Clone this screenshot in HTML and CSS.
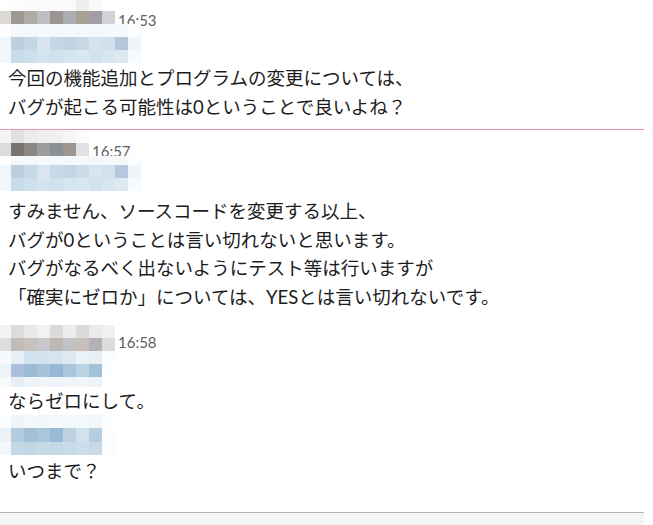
FILE: index.html
```html
<!DOCTYPE html>
<html lang="ja">
<head>
<meta charset="utf-8">
<title>chat</title>
<link rel="stylesheet" href="styles.css">
</head>
<body>
<div class="chat">
  <div class="msg m1">
    <div class="head">
      <div class="mosaic c9 r-name1">
        <i style="background:#fff"></i><i style="background:#fdfdfd"></i><i style="background:#fbfbfb"></i><i style="background:#fbfbfb"></i><i style="background:#fafafa"></i><i style="background:#fafafa"></i><i style="background:#eeeeee"></i><i style="background:#fafafa"></i><i style="background:#fff"></i>
        <i style="background:#dcd8d4"></i><i style="background:#9c9896"></i><i style="background:#b0aca4"></i><i style="background:#bebdc2"></i><i style="background:#9a9590"></i><i style="background:#aaaeb2"></i><i style="background:#a89f95"></i><i style="background:#a29ca6"></i><i style="background:#d2d2d4"></i>
      </div>
      <span class="time t1">16:53</span>
    </div>
    <div class="mosaic c11 r-blue1">
      <i style="background:#fbfdfe"></i><i style="background:#f5f9fb"></i><i style="background:#f4f8fb"></i><i style="background:#f6f9fb"></i><i style="background:#f5f8fb"></i><i style="background:#f5f9fb"></i><i style="background:#f6f9fb"></i><i style="background:#f4f8fb"></i><i style="background:#f5f9fb"></i><i style="background:#f6f9fc"></i><i style="background:#fbfdfe"></i>
      <i style="background:#f2f6fa"></i><i style="background:#bcd0e0"></i><i style="background:#c4d8e4"></i><i style="background:#d8e4ee"></i><i style="background:#c4d8e6"></i><i style="background:#c0d4e2"></i><i style="background:#c8d8e6"></i><i style="background:#d4e4ee"></i><i style="background:#d0e0ec"></i><i style="background:#b4c8dc"></i><i style="background:#eef4f8"></i>
      <i style="background:#f3f7fa"></i><i style="background:#c8dcea"></i><i style="background:#cce0ec"></i><i style="background:#d4e4ee"></i><i style="background:#d0e2ed"></i><i style="background:#d6e6f0"></i><i style="background:#d8e7f1"></i><i style="background:#d2e2ed"></i><i style="background:#d6e5f0"></i><i style="background:#dce8f2"></i><i style="background:#f6fafc"></i>
    </div>
    <p class="text t-m1">今回の機能追加とプログラムの変更については、<br>バグが起こる可能性は0ということで良いよね？</p>
  </div>
  <div class="divider"></div>
  <div class="msg m2">
    <div class="head">
      <div class="mosaic c7 r-name">
        <i style="background:#f4f4f4"></i><i style="background:#e0e0e0"></i><i style="background:#ebebeb"></i><i style="background:#eeeeee"></i><i style="background:#f0f0f0"></i><i style="background:#f6f6f6"></i><i style="background:#fcfcfc"></i>
        <i style="background:#dcdcdc"></i><i style="background:#767374"></i><i style="background:#8a8682"></i><i style="background:#9c9c9c"></i><i style="background:#8c9094"></i><i style="background:#9c9590"></i><i style="background:#e0e2e6"></i>
      </div>
      <span class="time t2">16:57</span>
    </div>
    <div class="mosaic c11 r-blue2">
      <i style="background:#fbfdfe"></i><i style="background:#f5f9fb"></i><i style="background:#f4f8fb"></i><i style="background:#f6f9fb"></i><i style="background:#f5f8fb"></i><i style="background:#f5f9fb"></i><i style="background:#f6f9fb"></i><i style="background:#f4f8fb"></i><i style="background:#f5f9fb"></i><i style="background:#f6f9fc"></i><i style="background:#fbfdfe"></i>
      <i style="background:#f2f6fa"></i><i style="background:#bccfdf"></i><i style="background:#c6dae5"></i><i style="background:#dae6ef"></i><i style="background:#c6dbe7"></i><i style="background:#c3d6e3"></i><i style="background:#cbdbe7"></i><i style="background:#d6e5ee"></i><i style="background:#d2e1ec"></i><i style="background:#b5c9de"></i><i style="background:#eef4f8"></i>
      <i style="background:#f3f7fa"></i><i style="background:#c9dcea"></i><i style="background:#cde0ec"></i><i style="background:#d4e4ee"></i><i style="background:#d0e2ed"></i><i style="background:#d6e6f0"></i><i style="background:#d8e7f1"></i><i style="background:#d2e2ed"></i><i style="background:#d6e5f0"></i><i style="background:#dde9f3"></i><i style="background:#f6fafc"></i>
    </div>
    <p class="text t-m2">すみません、ソースコードを変更する以上、<br>バグが0ということは言い切れないと思います。<br>バグがなるべく出ないようにテスト等は行いますが<br>「確実にゼロか」については、YESとは言い切れないです。</p>
  </div>
  <div class="msg m3">
    <div class="head">
      <div class="mosaic c9 r-name">
        <i style="background:#f3f3f3"></i><i style="background:#dcdcdc"></i><i style="background:#e8e8e8"></i><i style="background:#f2f2f2"></i><i style="background:#dcdad8"></i><i style="background:#ececec"></i><i style="background:#dcdad8"></i><i style="background:#eaeaea"></i><i style="background:#f0f0f0"></i>
        <i style="background:#e0dedc"></i><i style="background:#c0bcba"></i><i style="background:#c8c2be"></i><i style="background:#c6c8cc"></i><i style="background:#beb8b4"></i><i style="background:#c2c2c6"></i><i style="background:#c8c0b8"></i><i style="background:#b4b0b8"></i><i style="background:#dcdcdc"></i>
      </div>
      <span class="time t3">16:58</span>
    </div>
    <div class="mosaic c9 r-blue3">
      <i style="background:#f6fafd"></i><i style="background:#e8f0f7"></i><i style="background:#d2e2ee"></i><i style="background:#d4e4ef"></i><i style="background:#d6e4ef"></i><i style="background:#dde9f2"></i><i style="background:#eaf2f8"></i><i style="background:#e8f0f6"></i><i style="background:#fafcfe"></i>
      <i style="background:#eef3f7"></i><i style="background:#a9c1da"></i><i style="background:#9cbcd6"></i><i style="background:#a6c3da"></i><i style="background:#94b8d6"></i><i style="background:#a9c6dc"></i><i style="background:#bcd3e3"></i><i style="background:#a4c1da"></i><i style="background:#fdfeff"></i>
      <i style="background:#f7fafc"></i><i style="background:#e8eef6"></i><i style="background:#eef4f9"></i><i style="background:#f0f5fa"></i><i style="background:#eef4fa"></i><i style="background:#f0f5f9"></i><i style="background:#f2f6fa"></i><i style="background:#eff4f8"></i><i style="background:#fff"></i>
    </div>
    <p class="text t-m3">ならゼロにして。</p>
    <div class="mosaic c9 r-blue4">
      <i style="background:#fafcfd"></i><i style="background:#f0f5f9"></i><i style="background:#f4f8fb"></i><i style="background:#f3f7fa"></i><i style="background:#f4f8fb"></i><i style="background:#f5f8fb"></i><i style="background:#f4f8fb"></i><i style="background:#f3f7fa"></i><i style="background:#fdfeff"></i>
      <i style="background:#edf2f6"></i><i style="background:#b4cce0"></i><i style="background:#a2c0d8"></i><i style="background:#aac6dc"></i><i style="background:#98bad6"></i><i style="background:#bcd2e2"></i><i style="background:#d2e2ec"></i><i style="background:#b4cde0"></i><i style="background:#fafcfe"></i>
      <i style="background:#f4f8fb"></i><i style="background:#c4d8e6"></i><i style="background:#c2d6e6"></i><i style="background:#c6dae8"></i><i style="background:#c4d8e6"></i><i style="background:#c8dce8"></i><i style="background:#cddeea"></i><i style="background:#c8dae8"></i><i style="background:#fafcfe"></i>
    </div>
    <p class="text t-m4">いつまで？</p>
  </div>
  <div class="footer"></div>
</div>
</body>
</html>
```

FILE: styles.css
```css
html, body {
  margin: 0;
  padding: 0;
  background: #ffffff;
}

body {
  font-family: Lato, "Noto Sans CJK JP", sans-serif;
  color: #1d1c1d;
  overflow: hidden;
}

.chat {
  width: 644px;
  height: 525px;
  display: flex;
  flex-direction: column;
}

.msg {
  display: flex;
  flex-direction: column;
}

.head {
  display: flex;
  align-items: flex-end;
}

.mosaic {
  display: grid;
  margin-left: -2px;
}

.mosaic i {
  display: block;
}

.c7 { grid-template-columns: repeat(7, 13px); }
.c9 { grid-template-columns: repeat(9, 13px); }
.c11 { grid-template-columns: repeat(11, 13px); }

.r-name1 { grid-template-rows: 11px 13px; }
.r-name { grid-template-rows: 13px 13px; }
.r-blue1 { grid-template-rows: 13px 13px 13px; }
.r-blue2 { grid-template-rows: 9px 13px 13px; }
.r-blue3 { grid-template-rows: 13px 13px 10px; }
.r-blue4 { grid-template-rows: 13px 14px 13px; }

.time {
  font-family: Lato, sans-serif;
  font-size: 15px;
  line-height: 16px;
  color: #616061;
  margin-left: 3px;
}

.t1 { margin-bottom: -4px; }
.t2 { margin-bottom: -3px; }
.t3 { margin-bottom: 1px; }

.text {
  margin: 0;
  padding-left: 8px;
  font-size: 18.5px;
  line-height: 28.6px;
  white-space: nowrap;
  text-spacing-trim: space-all;
}

.t-m1 { margin-top: 1px; }
.t-m2 { margin-top: 6px; }
.t-m3 { margin-top: 0; }
.t-m4 { margin-top: 2px; }

.m3 { margin-top: 13px; }

.divider {
  height: 1px;
  background: #e895b2;
  margin-top: 8px;
}

.footer {
  margin-top: auto;
  height: 12px;
  border-top: 1px solid #b3b3b3;
  background: #f5f5f5;
}
```
